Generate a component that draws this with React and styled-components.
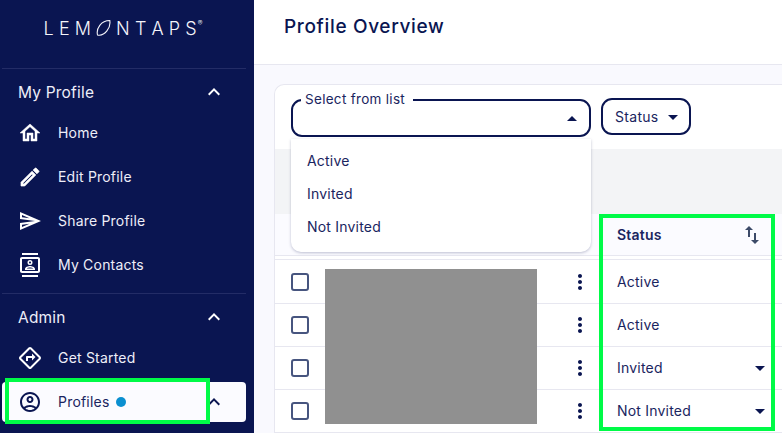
import React from "react";
import styled, { createGlobalStyle } from "styled-components";
import {
  MdOutlineHome, MdOutlineEdit, MdOutlineSend, MdOutlineContacts, MdOutlineDirections,
  MdOutlineAccountCircle, MdExpandLess, MdMoreVert, MdArrowDropDown, MdArrowDropUp, MdSwapVert,
} from "react-icons/md";

const navy = "#0a1551";
const ink = "#1a2560";

const Global = createGlobalStyle`
  html, body { margin: 0; padding: 0; width: 782px; height: 433px; overflow: hidden; }
  body { font-family: "Inter", "Liberation Sans", sans-serif; color: ${ink}; }
  * { box-sizing: border-box; }
`;

const Page = styled.div`
  position: relative;
  display: flex;
  width: 782px;
  height: 433px;
  overflow: hidden;
  background: #f9f9fe;
`;

const Sidebar = styled.aside`
  flex: 0 0 254px;
  display: flex;
  flex-direction: column;
  background: ${navy};
  color: #eeeef8;
  padding: 0 8px 0 2px;
`;

const Logo = styled.div`
  height: 68px;
  display: flex;
  align-items: center;
  justify-content: center;
  gap: 5px;
  padding: 0 2px 12px 0;
  font-size: 18px;
  font-weight: 300;
  color: #f4f4fa;
`;

const LogoLetters = styled.span`
  display: flex;
  gap: 5.2px;
`;

const LogoMark = styled.sup`
  font-size: 7px;
  line-height: 1;
  margin: -9px 0 0 -4px;
`;

const Section = styled.section`
  border-top: 1px solid #232c66;
  padding-top: ${(p) => p.$top}px;
  height: ${(p) => p.$height}px;
  display: flex;
  flex-direction: column;
`;

const SectionHead = styled.div`
  height: 22px;
  display: flex;
  align-items: center;
  justify-content: space-between;
  padding: 0 20px 0 16px;
  font-size: 15.5px;
  letter-spacing: 0.2px;
  font-weight: 400;
  margin-bottom: 10px;
  svg { font-size: 24px; color: #fff; }
`;

const Label = styled.span`
  margin-bottom: 2px;
`;

const NavItem = styled.div`
  position: relative;
  height: 40px;
  margin-bottom: 4px;
  display: flex;
  align-items: center;
  padding-left: 16px;
  gap: 16px;
  border-radius: 4px;
  font-size: 14px;
  letter-spacing: 0.2px;
  background: ${(p) => (p.$active ? "#fbfbff" : "transparent")};
  color: ${(p) => (p.$active ? ink : "#eeeef8")};
`;

const NavIcon = styled.span`
  display: flex;
  width: 24px;
  justify-content: center;
  font-size: 24px;
  color: ${(p) => (p.$active ? navy : "#fff")};
  svg path:not([fill="none"]) {
    stroke: currentColor;
    stroke-width: ${(p) => p.$bold || 0};
  }
`;

const Dot = styled.span`
  width: 10px;
  height: 10px;
  margin-left: -10px;
  border-radius: 50%;
  background: #0a8fd0;
`;

const NavChevron = styled.span`
  margin-left: auto;
  display: flex;
  padding-right: 20px;
  font-size: 24px;
  color: ${navy};
`;

const Main = styled.main`
  flex: 1;
  min-width: 0;
  display: flex;
  flex-direction: column;
`;

const Header = styled.header`
  height: 65px;
  flex: none;
  display: flex;
  align-items: flex-start;
  padding: 14px 30px;
  background: #fff;
  border-bottom: 1px solid #e7e7f0;
  font-size: 19px;
  font-weight: 500;
  letter-spacing: 0.65px;
  line-height: 26px;
  color: ${navy};
`;

const Card = styled.div`
  flex: 1;
  margin: 19px 0 0 20px;
  border: 1px solid #e7e7f0;
  border-right: 0;
  border-radius: 10px 0 0 0;
  background: #fff;
  display: flex;
  flex-direction: column;
`;

const Filters = styled.div`
  height: 64px;
  flex: none;
  display: flex;
  align-items: flex-start;
  gap: 10px;
  padding: 6px 0 0 16px;
`;

const SelectBox = styled.fieldset`
  width: 300px;
  height: 46px;
  margin: 0;
  padding: 0 8px 0 8px;
  border: 2px solid ${navy};
  border-radius: 11px;
  display: flex;
  align-items: center;
  justify-content: flex-end;
  legend {
    padding: 0 8px 2px 4px;
    margin-left: 0;
    font-size: 13.5px;
    letter-spacing: 0.3px;
    line-height: 16px;
    color: ${ink};
  }
  svg { font-size: 24px; color: ${navy}; margin: -6px -3px 0 0; }
`;

const StatusButton = styled.div`
  width: 90px;
  height: 37px;
  margin-top: 7px;
  border: 2px solid ${navy};
  border-radius: 11px;
  display: flex;
  align-items: center;
  padding-left: 12px;
  gap: 2px;
  font-size: 14px;
  letter-spacing: 0.3px;
  color: ${ink};
  svg { font-size: 24px; color: ${navy}; }
`;

const Band = styled.div`
  height: 65px;
  flex: none;
  background: #f3f4f6;
`;

const Row = styled.div`
  height: ${(p) => p.$height}px;
  flex: none;
  display: grid;
  grid-template-columns: 325px 175px 1fr;
  align-items: stretch;
  border-bottom: 1px solid #e7e7f0;
`;

const HeaderRow = styled(Row)`
  background: #fbfbff;
  box-shadow: 0 3px 0 #fff, 0 4px 0 #e7e7f0;
  margin-bottom: 5px;
`;

const NameCell = styled.div`
  display: flex;
  align-items: center;
  justify-content: space-between;
  padding: 0 8px 0 16px;
  svg { font-size: 24px; color: ${navy}; }
`;

const Check = styled.span`
  width: 18px;
  height: 18px;
  border: 2px solid #47557f;
  border-radius: 3px;
`;

const StatusCell = styled.div`
  display: flex;
  align-items: center;
  justify-content: space-between;
  padding: 0 3px 0 17px;
  font-size: 14px;
  letter-spacing: 0.2px;
  font-weight: ${(p) => (p.$head ? 600 : 400)};
  color: ${ink};
  svg { font-size: 24px; color: ${navy}; }
`;

const SortIcon = styled.span`
  display: flex;
  margin-right: 8px;
  svg { font-size: 24px; color: #3c4a68; }
`;

const Menu = styled.div`
  position: absolute;
  left: 291px;
  top: 139px;
  width: 300px;
  height: 113px;
  padding: 5px 0;
  background: #fff;
  border-radius: 0 0 10px 10px;
  box-shadow: 0 1px 3px rgba(30, 35, 90, 0.28);
  z-index: 2;
`;

const MenuItem = styled.div`
  height: 33px;
  display: flex;
  align-items: center;
  padding-left: 16px;
  font-size: 14px;
  letter-spacing: 0.2px;
  color: ${ink};
`;

const Redaction = styled.div`
  position: absolute;
  left: 325px;
  top: 269px;
  width: 212px;
  height: 155px;
  background: #909090;
  z-index: 1;
`;

const Highlight = styled.div`
  position: absolute;
  left: ${(p) => p.$x}px;
  top: ${(p) => p.$y}px;
  width: ${(p) => p.$w}px;
  height: ${(p) => p.$h}px;
  border: 4px solid #00fb47;
  z-index: 3;
`;

const Lemon = () => (
  <svg width="15" height="18" viewBox="0 0 15 18" fill="none" stroke="#f4f4fa" strokeWidth="1.1">
    <path d="M1.5 16C0 9.5 5 1.5 13.8 1.5 15 8.5 9 17.5 1.5 16Z" />
  </svg>
);

const navTop = [
  ["Home", MdOutlineHome, 0.5],
  ["Edit Profile", MdOutlineEdit, 0.7],
  ["Share Profile", MdOutlineSend, 0],
  ["My Contacts", MdOutlineContacts, 0],
];

const rows = [
  ["Active", false],
  ["Active", false],
  ["Invited", true],
  ["Not Invited", true],
];

export default function App() {
  return (
    <Page>
      <Global />
      <Sidebar>
        <Logo>
          <LogoLetters>
            <span>L</span><span>E</span><span>M</span>
          </LogoLetters>
          <Lemon />
          <LogoLetters>
            <span>N</span><span>T</span><span>A</span><span>P</span><span>S</span>
          </LogoLetters>
          <LogoMark>®</LogoMark>
        </Logo>
        <Section $top={12} $height={225}>
          <SectionHead>My Profile<MdExpandLess /></SectionHead>
          {navTop.map(([label, Icon, bold]) => (
            <NavItem key={label}>
              <NavIcon $bold={bold}><Icon /></NavIcon>
              <Label>{label}</Label>
            </NavItem>
          ))}
        </Section>
        <Section $top={12} $height={140}>
          <SectionHead>Admin<MdExpandLess /></SectionHead>
          <NavItem>
            <NavIcon><MdOutlineDirections /></NavIcon>
            <Label>Get Started</Label>
          </NavItem>
          <NavItem $active>
            <NavIcon $active><MdOutlineAccountCircle /></NavIcon>
            <Label>Profiles</Label>
            <Dot />
            <NavChevron><MdExpandLess /></NavChevron>
          </NavItem>
        </Section>
      </Sidebar>
      <Main>
        <Header>Profile Overview</Header>
        <Card>
          <Filters>
            <SelectBox>
              <legend>Select from list</legend>
              <MdArrowDropUp />
            </SelectBox>
            <StatusButton>Status<MdArrowDropDown /></StatusButton>
          </Filters>
          <Band />
          <HeaderRow $height={42}>
            <NameCell />
            <StatusCell $head>
              Status
              <SortIcon><MdSwapVert /></SortIcon>
            </StatusCell>
          </HeaderRow>
          {rows.map(([status, caret], i) => (
            <Row key={i} $height={43}>
              <NameCell><Check /><MdMoreVert /></NameCell>
              <StatusCell>
                <Label>{status}</Label>
                {caret && <MdArrowDropDown />}
              </StatusCell>
            </Row>
          ))}
        </Card>
      </Main>
      <Menu>
        <MenuItem>Active</MenuItem>
        <MenuItem>Invited</MenuItem>
        <MenuItem>Not Invited</MenuItem>
      </Menu>
      <Redaction />
      <Highlight $x={5} $y={378} $w={205} $h={46} />
      <Highlight $x={599} $y={214} $w={176} $h={217} />
    </Page>
  );
}
